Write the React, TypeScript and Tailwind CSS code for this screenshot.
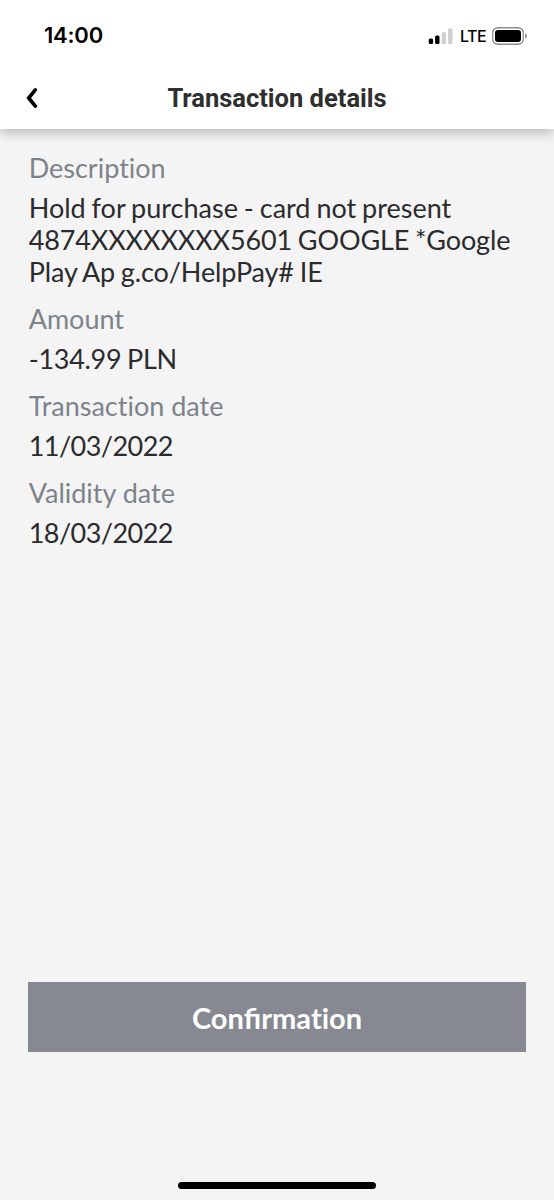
import { ReactNode } from "react";

const details = [
  {
    label: "Description",
    lines: [
      { text: "Hold for purchase - card not present", className: "tracking-normal" },
      { text: "4874XXXXXXXX5601 GOOGLE *Google", className: "tracking-[-0.13px]" },
      { text: "Play Ap g.co/HelpPay# IE", className: "tracking-[-0.12px]" },
    ],
  },
  { label: "Amount", lines: [{ text: "-134.99 PLN", className: "tracking-[-0.29px]" }] },
  { label: "Transaction date", lines: [{ text: "11/03/2022", className: "tracking-[-0.55px]" }] },
  { label: "Validity date", lines: [{ text: "18/03/2022", className: "tracking-[-0.55px]" }] },
];

function StatusBar() {
  return (
    <div className="flex h-[66px] items-start justify-between pt-[22px] pr-[26px] pl-[44px] text-black">
      <span className="font-['Inter',sans-serif] text-[22px] leading-[27px] font-semibold tracking-[-0.2px]">14:00</span>
      <div className="flex h-[28px] items-center">
        <svg width="25" height="17" viewBox="0 0 25 17">
          <rect x="0.7" y="10.5" width="4.4" height="5.5" rx="1.5" fill="#000" />
          <rect x="7.1" y="7.5" width="4.4" height="8.5" rx="1.5" fill="#000" />
          <rect x="13.6" y="4" width="4.4" height="12" rx="1.5" fill="#cfcfcf" />
          <rect x="20.1" y="0.3" width="4.4" height="15.7" rx="1.5" fill="#cfcfcf" />
        </svg>
        <span className="ml-[7px] w-[26px] font-['Inter',sans-serif] text-[16px] leading-none font-medium tracking-[-0.5px]">LTE</span>
        <svg className="ml-[6px]" width="36" height="18" viewBox="0 0 36 18">
          <rect x="0.75" y="0.75" width="30.5" height="16.5" rx="5" fill="none" stroke="#8c8c8c" strokeWidth="1.3" />
          <rect x="3" y="3" width="26" height="12" rx="3" fill="#000" />
          <path d="M33 6.2c1.4.5 2 1.5 2 2.8s-.6 2.3-2 2.8z" fill="#999" />
        </svg>
      </div>
    </div>
  );
}

function Detail({ label, children }: { label: string; children: ReactNode }) {
  return (
    <div className="mb-[15px]">
      <dt className="mb-[8px] leading-[32px] text-[#7d838b]">{label}</dt>
      <dd className="leading-[32px] text-[#2b2b2d] [word-spacing:-1px]">{children}</dd>
    </div>
  );
}

export default function App() {
  return (
    <div className="flex h-[1200px] w-[554px] flex-col bg-[#f4f4f4] font-['Lato',sans-serif]">
      <header className="z-10 h-[129px] shrink-0 bg-white shadow-[0_4px_11px_rgba(0,0,0,0.24)]">
        <StatusBar />
        <div className="flex h-[63px] items-center px-[26px]">
          <button className="w-[30px]" aria-label="Back">
            <svg width="12" height="20" viewBox="0 0 12 20" fill="none" stroke="#000" strokeWidth="3.6" strokeLinecap="round">
              <path d="M9.3 1.9L2.7 10l6.6 8.1" />
            </svg>
          </button>
          <h1 className="flex-1 pt-[1px] pr-[30px] text-center font-['Roboto',sans-serif] text-[25.5px] font-bold text-[#2f2f2f]">
            Transaction details
          </h1>
        </div>
      </header>

      <main className="flex flex-1 flex-col px-[28px] pt-[23px]">
        <dl className="pl-[0.7px] text-[27px] [font-variant-ligatures:none]">
          {details.map((d) => (
            <Detail key={d.label} label={d.label}>
              {d.lines.map((line) => (
                <span key={line.text} className={`block whitespace-nowrap ${line.className}`}>{line.text}</span>
              ))}
            </Detail>
          ))}
        </dl>
        <button className="mt-auto mb-[133px] h-[70px] bg-[#868992] pt-[1px] text-[29px] font-bold text-white [font-variant-ligatures:none]">
          Con<span className="[font-variant-ligatures:normal]">fi</span>rmation
        </button>
      </main>

      <footer className="flex h-[15px] shrink-0 justify-center">
        <div className="mt-[-3px] h-[7px] w-[198px] rounded-full bg-black" />
      </footer>
    </div>
  );
}
